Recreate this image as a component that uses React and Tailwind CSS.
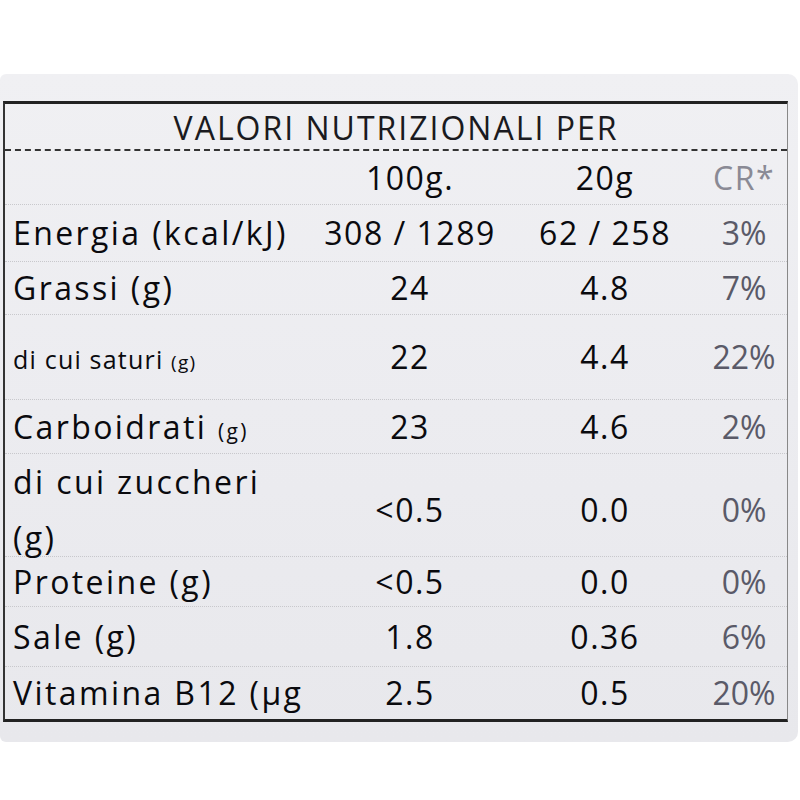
export default function App() {
  const rows = [
    { h: "h-[57px]", label: <span>Energia (kcal/kJ)</span>, a: "308 / 1289", b: "62 / 258", c: "3%" },
    { h: "h-[53px]", label: <span>Grassi (g)</span>, a: "24", b: "4.8", c: "7%" },
    { h: "h-[85px]", label: <span className="text-[25px] tracking-[1.2px]">di cui saturi <span className="text-[19px]">(g)</span></span>, a: "22", b: "4.4", c: "22%" },
    { h: "h-[54px]", label: <span>Carboidrati <span className="text-[21px]">(g)</span></span>, a: "23", b: "4.6", c: "2%" },
    { h: "h-[103px]", label: <span className="leading-[56px]">di cui zuccheri<br />(g)</span>, a: "<0.5", b: "0.0", c: "0%" },
    { h: "h-[50px]", label: <span>Proteine (g)</span>, a: "<0.5", b: "0.0", c: "0%" },
    { h: "h-[60px]", label: <span>Sale (g)</span>, a: "1.8", b: "0.36", c: "6%" },
    { h: "h-[52px]", label: <span>Vitamina B12 (µg</span>, a: "2.5", b: "0.5", c: "20%", last: true },
  ];
  return (
    <div className="w-[800px] h-[800px] bg-white overflow-hidden" style={{ fontFamily: '"Open Sans", "Noto Sans", sans-serif' }}>
      <div className="mt-[74px] w-[798px] h-[668px] rounded-r-[10px] rounded-l-[6px] bg-gradient-to-b from-[#f0f0f3] via-[#ececf0] to-[#e8e8ec] pt-[27px] pl-[3px]">
        <div className="w-[785px] border-t-[3px] border-l-2 border-r border-b-[3px] border-t-[#222] border-l-[#333] border-r-[#888] border-b-[#222] text-[#0a0a0e] font-medium">
          <div className="h-[47px] border-b-2 border-dashed border-[#333] flex items-center justify-center text-[32px] tracking-[2px] pt-[2px] text-[#1a1a20] font-normal">
            VALORI NUTRIZIONALI PER
          </div>
          <div className="h-[54px] grid grid-cols-[310px_190px_200px_1fr] items-center text-[32px] border-b border-dotted border-[#c8c8cc] tracking-[1.5px]">
            <div></div>
            <div className="text-center">100g.</div>
            <div className="text-center">20g</div>
            <div className="text-center text-[#8a8a95] pr-[4px] font-normal">CR*</div>
          </div>
          {rows.map((r, i) => (
            <div
              key={i}
              className={`${r.h} grid grid-cols-[310px_190px_200px_1fr] items-center text-[32px] tracking-[2.4px] ${r.last ? "" : "border-b border-dotted border-[#c8c8cc]"}`}
            >
              <div className="pl-[8px] whitespace-nowrap">{r.label}</div>
              <div className="text-center tracking-[1.5px]">{r.a}</div>
              <div className="text-center tracking-[1.5px]">{r.b}</div>
              <div className="text-center text-[#5a5a68] pr-[4px] tracking-[0px] font-normal">{r.c}</div>
            </div>
          ))}
        </div>
      </div>
    </div>
  );
}
